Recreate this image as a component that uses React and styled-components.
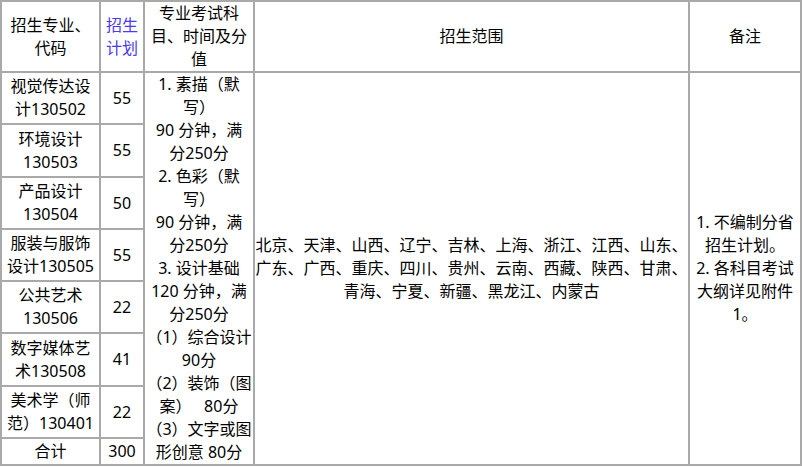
import React from "react";
import styled, { createGlobalStyle } from "styled-components";

const majors = [
    { name: ["视觉传达设", "计130502"], plan: 55, h: 52 },
    { name: ["环境设计", "130503"], plan: 55, h: 53 },
    { name: ["产品设计", "130504"], plan: 50, h: 52 },
    { name: ["服装与服饰", "设计130505"], plan: 55, h: 52 },
    { name: ["公共艺术", "130506"], plan: 22, h: 52 },
    { name: ["数字媒体艺", "术130508"], plan: 41, h: 53 },
    { name: ["美术学（师", "范）130401"], plan: 22, h: 52 },
];

const examLines = [
    "1. 素描（默",
    "写）",
    "90 分钟，满",
    "分250分",
    "2. 色彩（默",
    "写）",
    "90 分钟，满",
    "分250分",
    "3. 设计基础",
    "120 分钟，满",
    "分250分",
    "（1）综合设计",
    "90分",
    "（2）装饰（图",
    "案）\u00a0\u00a0 80分",
    "（3）文字或图",
    "形创意 80分",
];

const regionLines = [
    "北京、天津、山西、辽宁、吉林、上海、浙江、江西、山东、",
    "广东、广西、重庆、四川、贵州、云南、西藏、陕西、甘肃、",
    "青海、宁夏、新疆、黑龙江、内蒙古",
];

const noteLines = ["1. 不编制分省", "招生计划。", "2. 各科目考试", "大纲详见附件", "1。"];

function Lines({ items }) {
    return items.map((line, i) => <Line key={i}>{line}</Line>);
}

export default function App() {
    return (
        <>
            <GlobalStyle />
            <Table>
                <colgroup>
                    <col style={{ width: 99 }} />
                    <col style={{ width: 44 }} />
                    <col style={{ width: 110 }} />
                    <col style={{ width: 435 }} />
                    <col style={{ width: 112 }} />
                </colgroup>
                <tbody>
                    <Row $h={71}>
                        <Cell>
                            <Lines items={["招生专业、", "代码"]} />
                        </Cell>
                        <Cell $color="#4a3af0">
                            <Lines items={["招生", "计划"]} />
                        </Cell>
                        <Cell>
                            <Lines items={["专业考试科", "目、时间及分", "值"]} />
                        </Cell>
                        <Cell>招生范围</Cell>
                        <Cell>备注</Cell>
                    </Row>
                    {majors.map((m, i) => (
                        <Row key={m.name[1]} $h={m.h}>
                            <Cell>
                                <Lines items={m.name} />
                            </Cell>
                            <Cell>{m.plan}</Cell>
                            {i === 0 && (
                                <>
                                    <Cell rowSpan={8} $top>
                                        <Lines items={examLines} />
                                    </Cell>
                                    <Cell rowSpan={8}>
                                        <Lines items={regionLines} />
                                    </Cell>
                                    <Cell rowSpan={8}>
                                        <Lines items={noteLines} />
                                    </Cell>
                                </>
                            )}
                        </Row>
                    ))}
                    <Row $h={27}>
                        <Cell>合计</Cell>
                        <Cell>300</Cell>
                    </Row>
                </tbody>
            </Table>
        </>
    );
}

const GlobalStyle = createGlobalStyle`
    body {
        margin: 0;
        background: #fff;
        font-family: "Noto Sans", "Noto Sans CJK SC", sans-serif;
        color: #000;
    }
`;
const Table = styled.table`
    width: 802px;
    table-layout: fixed;
    border-collapse: collapse;
    border: 2px solid #a9a9a9;
`;
const Row = styled.tr`
    height: ${(p) => p.$h}px;
`;
const Cell = styled.td`
    border: 2px solid #a9a9a9;
    padding: 0;
    text-align: center;
    vertical-align: ${(p) => (p.$top ? "top" : "middle")};
    font-size: 16px;
    line-height: 23px;
    color: ${(p) => p.$color || "#000"};
    white-space: nowrap;
    overflow: hidden;
`;
const Line = styled.div`
    line-height: 23px;
`;
